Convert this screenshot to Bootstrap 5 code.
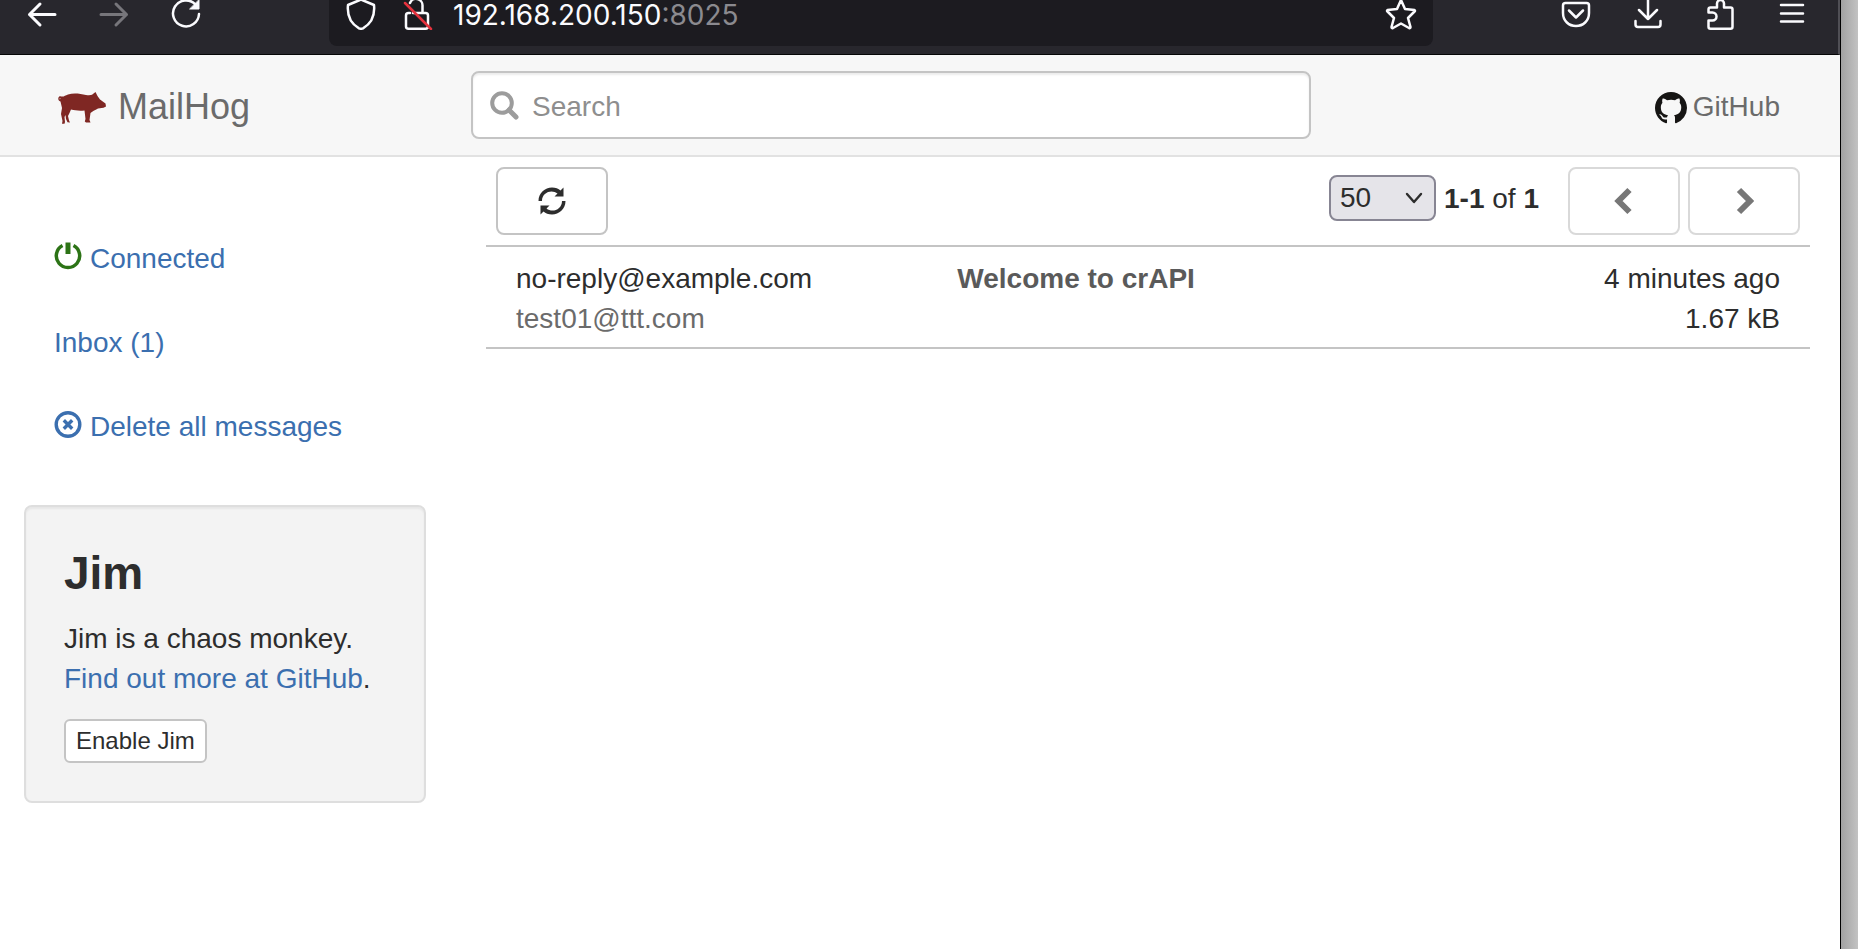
<!DOCTYPE html>
<html lang="en">
<head>
<meta charset="utf-8">
<meta name="viewport" content="width=device-width, initial-scale=1">
<title>MailHog</title>
<link href="https://cdn.jsdelivr.net/npm/bootstrap@5.3.0/dist/css/bootstrap.min.css" rel="stylesheet">
<style>
  body { font: 28px/40px "Liberation Sans", Arial, sans-serif; color: #2d2d2d; background: #fff; }
  a { color: #3b6faf; text-decoration: none; }
  svg { display: block; flex: none; }
  .window { min-height: 100vh; border-right: 1px solid #000; min-width: 0; }
  .desktop { flex: 0 0 17px; background: linear-gradient(90deg, #a2a2a2, #c2c2c2); }

  /* browser toolbar */
  .browser { height: 55px; background: #28272d; border-bottom: 1px solid #060607; border-right: 2px solid #504f55; color: #fbfbfe; }
  .browser svg { fill: none; stroke: currentColor; stroke-width: 2.5; stroke-linecap: round; stroke-linejoin: round; }
  .browser svg.heavy { stroke-width: 3; }
  .browser button { padding: 0; border: 0; background: none; color: inherit; }
  .browser .off { color: #77767b; }
  .browser-nav { flex: 0 0 329px; padding-left: 26px; gap: 40px; }
  .browser-tools { flex: 0 0 405px; padding-right: 30px; gap: 40px; }
  .urlbar { height: 46px; background: #1c1b20; border-radius: 0 0 8px 8px; padding: 0 16px; }
  .address, .address:hover { font: 28px/30px Inter, sans-serif; color: #fbfbfe; margin-left: 20px; }
  .address span { color: #8b8a8f; }
  .h-icons { height: 30px; }

  /* site header */
  .masthead { display: grid; grid-template-columns: 471fr 840fr 529fr; align-items: center; height: 102px; background: #f7f7f7; border-bottom: 2px solid #e2e2e2; }
  .masthead a { color: #6b6b6b; }
  .hog { font-size: 36px; padding: 4px 0 0 58px; gap: 10px; }
  .hog svg { margin-top: 4px; }
  .hub { padding: 4px 60px 0 0; gap: 6px; }
  .hub svg { margin-top: 2px; }
  .search { height: 68px; border: 2px solid #c4c4c4; border-radius: 8px; background: #fff; box-shadow: inset 0 2px 2px rgba(0,0,0,.075); padding: 0 18px 0 17px; }
  .search input { font-size: 28px; line-height: 40px; padding: 3px 0 0 13px; color: #2d2d2d; }
  .search input::placeholder { color: #8e8e8e; opacity: 1; }

  /* sidebar */
  .side { flex: 0 0 25%; padding: 62px 34px 0 24px; }
  .side .nav { gap: 4px; margin-bottom: 38px; }
  .side .nav-link { padding: 20px 30px; color: #3b6faf; gap: 8px; }
  .well { background: #f3f3f3; border: 2px solid #dedede; border-radius: 8px; box-shadow: inset 0 2px 2px rgba(0,0,0,.05); padding: 40px 38px 38px; }
  .well h3 { font-size: 46px; line-height: 52px; font-weight: 700; margin: 0 0 20px; }
  .well p { margin-bottom: 20px; }
  .btn-plain { --bs-btn-color: #2d2d2d; --bs-btn-bg: #fff; --bs-btn-border-color: #c4c4c4; --bs-btn-border-width: 2px; --bs-btn-border-radius: 8px; --bs-btn-hover-bg: #e6e6e6; --bs-btn-hover-border-color: #adadad;
    --bs-btn-disabled-bg: #fff; --bs-btn-disabled-border-color: #d9d9d9; --bs-btn-disabled-color: #777; --bs-btn-disabled-opacity: 1; }
  .btn-small { --bs-btn-font-size: 24px; --bs-btn-line-height: 36px; --bs-btn-padding-y: 2px; --bs-btn-padding-x: 10px; --bs-btn-border-radius: 6px; }
  .btn-tool { width: 112px; height: 68px; --bs-btn-padding-x: 0; }

  /* message list */
  .inbox { margin: 0 30px 0 26px; min-width: 0; }
  .toolbar { padding: 10px 10px; }
  .per-page { width: 107px; height: 46px; font-size: 28px; line-height: 32px; padding: 0 0 0 9px; color: #2d2d2d; background-color: #e5e4e9; border: 2px solid #878593; border-radius: 8px; background-size: 18px 12px; background-position: right 11px center;
    background-image: url("data:image/svg+xml,%3csvg xmlns='http://www.w3.org/2000/svg' viewBox='0 0 18 12'%3e%3cpath fill='none' stroke='%232d2d2d' stroke-width='2.4' stroke-linecap='round' stroke-linejoin='round' d='M2 2l7 8 7-8'/%3e%3c/svg%3e"); }
  .count { padding: 0 29px 4px 8px; }
  .pager-select { padding-bottom: 6px; }
  .message { --bs-gutter-x: 60px; margin: 0; padding: 12px 0 8px; border-top: 2px solid #c4c4c4; border-bottom: 2px solid #c4c4c4; }
  .faded { color: #6b6b6b; }
  .subject { color: #5a5a5a; }
</style>
</head>
<body>
<div class="d-flex">
  <div class="window flex-grow-1">
    <div class="browser d-flex align-items-start">
      <div class="browser-nav d-flex align-items-center h-icons">
        <button type="button" aria-label="Back"><svg class="heavy" width="32" height="30" viewBox="0 0 32 30"><path d="M29 14.500H3.500M14 4 3.500 14.500 14 25"/></svg></button>
        <button type="button" aria-label="Forward" class="off"><svg class="heavy" width="32" height="30" viewBox="0 0 32 30"><path d="M3 14.500H28.500M18 4 28.500 14.500 18 25"/></svg></button>
        <button type="button" aria-label="Reload"><svg width="32" height="30" viewBox="0 0 32 30"><path d="M29 14A13 13 0 1 1 25.500 4.500"/><path d="M29 0V9H20Z" fill="currentColor" stroke-width="1"/></svg></button>
      </div>
      <div class="urlbar flex-grow-1">
        <div class="d-flex align-items-center h-icons">
          <button type="button" aria-label="Tracking protection"><svg width="32" height="30" viewBox="0 0 32 30"><path d="M16-.5 29 5C30 15 26.500 23.500 18 28.300Q16 29.300 14 28.300C5.500 23.500 2 15 3 5Z"/></svg></button>
          <button type="button" aria-label="Connection not secure" class="ms-4"><svg width="32" height="30" viewBox="0 0 32 30"><path d="M9 3A6.500 6.500 0 0 1 21.500 6V13M12 13H24.500Q27 13 27 15.500V26.500Q27 28.700 24.500 28.700H7.500Q5 28.700 5 26.500V15.500Q5 13 7.500 13H9"/><path d="M4 3 30 29" stroke="#e5323e"/></svg></button>
          <a class="address flex-grow-1" href="#">192.168.200.150<span>:8025</span></a>
          <button type="button" aria-label="Bookmark"><svg width="32" height="30" viewBox="0 0 32 30"><path d="M16 0 20 9 29.500 10Q30.500 10.500 29.500 11.500L23 18 25.500 27Q25.500 28.500 24 28L16 23.500 8 28Q6.500 28.500 6.500 27L9 18 2.500 11.500Q1.500 10.500 2.500 10L12 9Z"/></svg></button>
        </div>
      </div>
      <div class="browser-tools d-flex align-items-center justify-content-end h-icons">
        <button type="button" aria-label="Pocket"><svg width="32" height="30" viewBox="0 0 32 30"><path d="M5.500 3H26.500Q29 3 29 5.500V13C29 21 23 26 16 26S3 21 3 13V5.500Q3 3 5.500 3ZM9 10.500 16 17.500 23 10.500"/></svg></button>
        <button type="button" aria-label="Downloads"><svg width="32" height="30" viewBox="0 0 32 30"><path d="M16-2V19M7 10 16 19 25 10M3.500 21V24.500Q3.500 27 6 27H26Q28.500 27 28.500 24.500V21"/></svg></button>
        <button type="button" aria-label="Extensions"><svg width="32" height="30" viewBox="0 0 32 30"><path d="M13 7.500V3.500A3.500 3.500 0 0 1 20 3.500V7.500H26.500Q28.500 7.500 28.500 9.500V26.700Q28.500 28.700 26.500 28.700H6.500Q4.500 28.700 4.500 26.700V20.500H8.500A4 4 0 0 0 8.500 12.500H4.500V9.500Q4.500 7.500 6.500 7.500Z"/></svg></button>
        <button type="button" aria-label="Menu"><svg width="32" height="30" viewBox="0 0 32 30"><path d="M5 5H27M5 13.500H27M5 21.500H27"/></svg></button>
      </div>
    </div>

    <header class="masthead">
      <a class="hog d-flex align-items-center" href="#">
        <svg width="50" height="34" viewBox="0 0 50 34" fill="#7f2723"><path d="M3 4.500C6 5 7 3.500 10 2.500 15 .8 22 1.500 28 3 31 3.600 33 3.200 34 2.800L37.500 0 39.500 4 42 7.500 47.500 11.500 48 14.500 45.500 15.800 40 16.500C37 18 34 19.500 32.500 21L31.500 28 32.500 30.500H28L26.800 29.500 27.500 27 26.500 18.500C21 19 17 18.500 13 17.500L11.500 21 10 24 11 28.500 12 30.500 9.500 30.200 8 27 7.500 23 6.500 25 7 30 6.500 31.800H4L4.500 29 3 22 4 16 2.500 9.500C1 9 0 7.500.3 6.200.8 4.500 1.800 4 3 4.500ZM1.500 6.200 1.800 7.500 2.800 6.500Z"/></svg>
        <span>MailHog</span>
      </a>
      <form class="search d-flex align-items-center" role="search" onsubmit="return false">
        <svg width="29" height="29" viewBox="0 0 29 29" fill="none" stroke="#9c9c9c"><circle cx="12" cy="12" r="9.800" stroke-width="4"/><path d="M19 19 26 26" stroke-width="5" stroke-linecap="round"/></svg>
        <input class="form-control border-0 bg-transparent shadow-none" type="text" placeholder="Search" aria-label="Search">
      </form>
      <a class="hub d-flex align-items-center justify-content-end" href="#">
        <svg width="32" height="32" viewBox="0 0 16 16" fill="#161514"><path d="M8 0C3.580 0 0 3.580 0 8c0 3.540 2.290 6.530 5.470 7.590.4.070.55-.17.55-.38 0-.19-.01-.82-.01-1.490-2.010.37-2.530-.49-2.690-.94-.09-.23-.48-.94-.82-1.130-.28-.15-.68-.52-.01-.53.63-.01 1.080.58 1.230.82.72 1.210 1.870.87 2.330.66.07-.52.28-.87.51-1.070-1.780-.2-3.640-.89-3.640-3.950 0-.87.31-1.590.82-2.150-.08-.2-.36-1.020.08-2.120 0 0 .67-.21 2.200.82.64-.18 1.320-.27 2-.27s1.360.09 2 .27c1.530-1.040 2.200-.82 2.200-.82.44 1.100.16 1.920.08 2.120.51.56.82 1.270.82 2.150 0 3.070-1.870 3.750-3.650 3.950.29.25.54.73.54 1.480 0 1.070-.01 1.930-.01 2.200 0 .21.15.46.55.38A8.010 8.010 0 0 0 16 8c0-4.420-3.580-8-8-8z"/></svg>
        <span>GitHub</span>
      </a>
    </header>

    <div class="d-flex">
      <aside class="side">
        <nav class="nav flex-column">
          <a class="nav-link d-flex" href="#">
            <svg width="28" height="32" viewBox="0 0 28 32" fill="none" stroke="#2c7316"><path d="M8.500 6.500A11.700 11.700 0 1 0 19.500 6.500" stroke-width="3.500"/><path d="M14 3.500V15" stroke-width="5"/></svg>
            <span>Connected</span>
          </a>
          <a class="nav-link" href="#">Inbox (1)</a>
          <a class="nav-link d-flex" href="#">
            <svg width="28" height="32" viewBox="0 0 28 32" fill="none" stroke="#3b6faf"><circle cx="14" cy="17.500" r="11.800" stroke-width="3.400"/><path d="M9.800 13.300 18.200 21.700M18.200 13.300 9.800 21.700" stroke-width="3.400"/></svg>
            <span>Delete all messages</span>
          </a>
        </nav>
        <section class="well">
          <h3>Jim</h3>
          <p>Jim is a chaos monkey.<br><a href="#">Find out more at GitHub</a>.</p>
          <button type="button" class="btn btn-plain btn-small d-block">Enable Jim</button>
        </section>
      </aside>

      <main class="inbox flex-grow-1">
        <div class="toolbar d-flex align-items-center">
          <button type="button" class="btn btn-plain btn-tool d-flex align-items-center justify-content-center me-auto" aria-label="Refresh">
            <svg width="28" height="28" viewBox="0 0 28 28" fill="#2d2d2d"><path d="M.5 14C.5 6 7 .5 14 .5 17.500.5 20.500 1.500 22.500 3.500L25.500.5V9.500H16.500L19.500 6.500C14 2 4 5 4 14ZM27.500 14C27.500 22 21 27.500 14 27.500 10.500 27.500 7.500 26.500 5.500 24.500L2.500 27.500V18.500H11.500L8.500 21.500C14 26 24 23 24 14Z"/></svg>
          </button>
          <div class="d-flex align-items-center pager-select">
            <select class="form-select per-page" aria-label="Messages per page"><option>50</option><option>100</option><option>250</option></select>
          </div>
          <div class="count"><b>1-1</b> of <b>1</b></div>
          <div class="d-flex gap-2">
            <button type="button" class="btn btn-plain btn-tool d-flex align-items-center justify-content-center" disabled aria-label="Previous page"><svg width="20" height="28" viewBox="0 0 20 28" fill="none" stroke="#777" stroke-width="6"><path d="M15.500 3 4.500 14 15.500 25"/></svg></button>
            <button type="button" class="btn btn-plain btn-tool d-flex align-items-center justify-content-center" disabled aria-label="Next page"><svg width="20" height="28" viewBox="0 0 20 28" fill="none" stroke="#777" stroke-width="6"><path d="M5 3 16 14 5 25"/></svg></button>
          </div>
        </div>
        <div class="row message">
          <div class="col-4">no-reply@example.com<br><span class="faded">test01@ttt.com</span></div>
          <div class="col-4 subject"><b>Welcome to crAPI</b></div>
          <div class="col-4 text-end">4 minutes ago<br>1.67 kB</div>
        </div>
      </main>
    </div>
  </div>
  <div class="desktop"></div>
</div>
</body>
</html>
